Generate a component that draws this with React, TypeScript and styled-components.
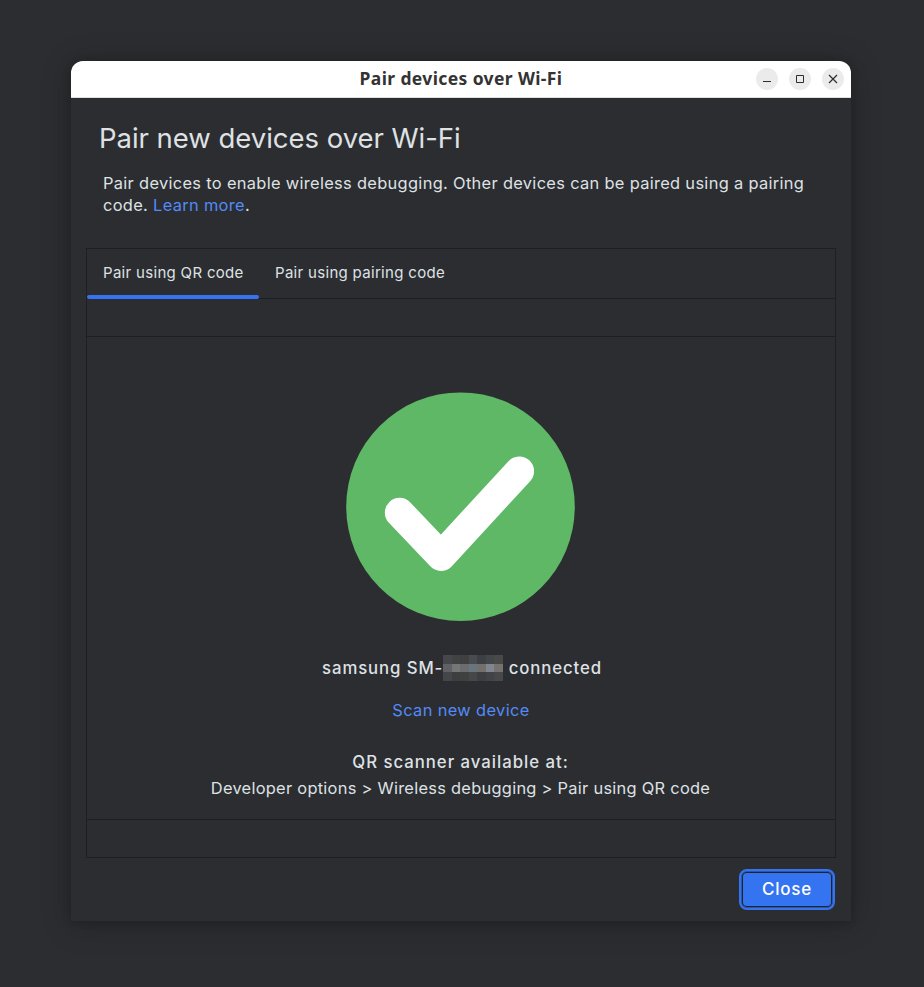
import React from "react";
import styled, { createGlobalStyle } from "styled-components";

const GlobalStyle = createGlobalStyle`
  * { box-sizing: border-box; }
  html, body, #root { height: 100%; }
  body {
    margin: 0;
    background: #2b2d30;
    overflow: hidden;
    font-family: Inter, "Liberation Sans", sans-serif;
    font-weight: 400;
    color: #dfe1e5;
  }
`;

const Desktop = styled.div`
  height: 987px;
  width: 924px;
  padding: 61px 73px 66px 71px;
  background: #2b2d30;
`;

const Window = styled.section`
  display: flex;
  flex-direction: column;
  width: 780px;
  height: 860px;
  background: #2b2d30;
  border-radius: 12px 12px 0 0;
  box-shadow: 0 3px 30px rgba(0, 0, 0, 0.25), 0 1px 8px rgba(0, 0, 0, 0.16);
`;

const TitleBar = styled.header`
  display: grid;
  grid-template-columns: 1fr auto 1fr;
  align-items: center;
  height: 37px;
  padding: 0 7px;
  background: #fff;
  border-bottom: 1px solid #dcdfdd;
  border-radius: 12px 12px 0 0;
`;

const WindowTitle = styled.div`
  grid-column: 2;
  height: 36px;
  font: 700 17.5px/34px "Noto Sans", sans-serif;
  letter-spacing: 0.38px;
  color: #333;
  white-space: nowrap;
`;

const WindowControls = styled.div`
  display: flex;
  justify-content: flex-end;
  gap: 11px;
`;

const ControlButton = styled.button`
  width: 22px;
  height: 22px;
  padding: 0;
  border: 0;
  border-radius: 50%;
  background: #ebebeb;
  svg { display: block; }
`;

const Intro = styled.div`
  height: 150px;
  padding: 20px 28px 0;
`;

const Heading = styled.h1`
  margin: 0;
  font-size: 27.5px;
  font-weight: 400;
  line-height: 40px;
  letter-spacing: -0.03px;
  white-space: nowrap;
`;

const Description = styled.p`
  margin: 14px 0 0 4px;
  font-size: 16.4px;
  line-height: 22px;
  letter-spacing: 0.325px;
  white-space: nowrap;
`;

const Link = styled.a`
  color: #548af7;
`;

const Panel = styled.main`
  display: flex;
  flex-direction: column;
  width: 750px;
  height: 610px;
  margin-left: 15px;
  border: 1px solid #1e1f22;
`;

const Tabs = styled.nav`
  display: flex;
  height: 50px;
  border-bottom: 1px solid #1e1f22;
`;

const Tab = styled.div<{ $active?: boolean }>`
  display: flex;
  flex-direction: column;
  justify-content: space-between;
  height: 50px;
  width: ${(p) => (p.$active ? 172 : 202)}px;
  font-size: 15px;
  line-height: 46px;
  letter-spacing: 0.31px;
  white-space: nowrap;
  &::after {
    content: "";
    height: 4px;
    border-radius: 2px;
    background: ${(p) => (p.$active ? "#3574f0" : "transparent")};
  }
`;

const TabLabel = styled.span`
  height: 46px;
  padding: 1px 0 0 16px;
`;

const Strip = styled.div<{ $edge: "top" | "bottom" }>`
  height: 38px;
  border-${(p) => p.$edge}: 1px solid #1e1f22;
`;

const Result = styled.div`
  flex: 1;
  display: flex;
  flex-direction: column;
  align-items: center;
  padding-top: 55px;
`;

const SuccessIcon = styled.svg`
  display: block;
  flex: none;
  margin-right: 1px;
`;

const Status = styled.div`
  display: flex;
  align-items: center;
  height: 26px;
  margin-top: 34px;
  padding-left: 2px;
  font-size: 16.75px;
  font-weight: 500;
  line-height: 24px;
  letter-spacing: 0.9px;
  white-space: pre;
`;

const StatusText = styled.span`
  height: 25px;
`;

const Redaction = styled.svg`
  display: block;
`;

const ScanLink = styled(Link)`
  margin-top: 18px;
  font-size: 16.4px;
  line-height: 22px;
  letter-spacing: 0.36px;
`;

const Hint = styled.div<{ $strong?: boolean }>`
  margin-top: ${(p) => (p.$strong ? 28 : 0)}px;
  padding-right: 1px;
  font-size: ${(p) => (p.$strong ? 16.75 : 16.4)}px;
  font-weight: ${(p) => (p.$strong ? 500 : 400)};
  line-height: 26px;
  letter-spacing: ${(p) => (p.$strong ? 0.98 : 0.28)}px;
  white-space: nowrap;
`;

const Footer = styled.footer`
  display: flex;
  justify-content: flex-end;
  padding: 11px 16px 0;
`;

const CloseButton = styled.button`
  width: 96px;
  height: 41px;
  padding: 0;
  border: 2px solid #3574f0;
  border-radius: 8px;
  background: #3574f0;
  box-shadow: inset 0 0 0 1px #2c55a4, inset 0 0 0 2px #1f2530;
  color: #fff;
  font: 500 17px/37px Inter, sans-serif;
  letter-spacing: 0.75px;
`;

const MOSAIC = [
  ["#45474a", "#414244", "#404040", "#494c4e", "#3d4043", "#44474a", "#49494a"],
  ["#5f6167", "#767677", "#6b6c6e", "#68757e", "#726f6d", "#80858f", "#747371"],
  ["#444649", "#3d3e3f", "#404041", "#454749", "#3c3e41", "#414447", "#474849"],
];
const COLUMNS = [0, 9, 17, 26, 34, 43, 51, 60];
const ROWS = [0, 9, 17, 26];

export default function App() {
  return (
    <>
      <GlobalStyle />
      <Desktop>
        <Window>
          <TitleBar>
            <WindowTitle>Pair devices over Wi-Fi</WindowTitle>
            <WindowControls>
              <ControlButton aria-label="Minimize">
                <svg width="22" height="22"><path d="M7 13.5h8" stroke="#2e2e2e" /></svg>
              </ControlButton>
              <ControlButton aria-label="Maximize">
                <svg width="22" height="22"><path d="M7.5 7.5h7v7h-7z" fill="none" stroke="#2e2e2e" /></svg>
              </ControlButton>
              <ControlButton aria-label="Close window">
                <svg width="22" height="22"><path d="M7 7l8 8M15 7l-8 8" stroke="#2e2e2e" strokeWidth="1.2" /></svg>
              </ControlButton>
            </WindowControls>
          </TitleBar>
          <Intro>
            <Heading>Pair new devices over Wi-Fi</Heading>
            <Description>
              Pair devices to enable wireless debugging. Other devices can be paired using a pairing
              <br />
              code. <Link>Learn more</Link>.
            </Description>
          </Intro>
          <Panel>
            <Tabs>
              <Tab $active><TabLabel>Pair using QR code</TabLabel></Tab>
              <Tab><TabLabel>Pair using pairing code</TabLabel></Tab>
            </Tabs>
            <Strip $edge="bottom" />
            <Result>
              <SuccessIcon width="229" height="229" viewBox="0 0 229 229">
                <circle cx="114.5" cy="114.7" r="114.3" fill="#5fb865" />
                <path
                  d="M53.6 120.6L95 164.2L173.3 79.2"
                  fill="none"
                  stroke="#fff"
                  strokeWidth="29.5"
                  strokeLinecap="round"
                  strokeLinejoin="round"
                />
              </SuccessIcon>
              <Status>
                <StatusText>samsung SM-</StatusText>
                <Redaction width="60" height="26" shapeRendering="crispEdges">
                  {MOSAIC.map((row, r) =>
                    row.map((fill, c) => (
                      <rect
                        key={`${r}-${c}`}
                        x={COLUMNS[c]}
                        y={ROWS[r]}
                        width={COLUMNS[c + 1] - COLUMNS[c]}
                        height={ROWS[r + 1] - ROWS[r]}
                        fill={fill}
                      />
                    )),
                  )}
                </Redaction>
                <StatusText> connected</StatusText>
              </Status>
              <ScanLink>Scan new device</ScanLink>
              <Hint $strong>QR scanner available at:</Hint>
              <Hint>Developer options &gt; Wireless debugging &gt; Pair using QR code</Hint>
            </Result>
            <Strip $edge="top" />
          </Panel>
          <Footer>
            <CloseButton>Close</CloseButton>
          </Footer>
        </Window>
      </Desktop>
    </>
  );
}
